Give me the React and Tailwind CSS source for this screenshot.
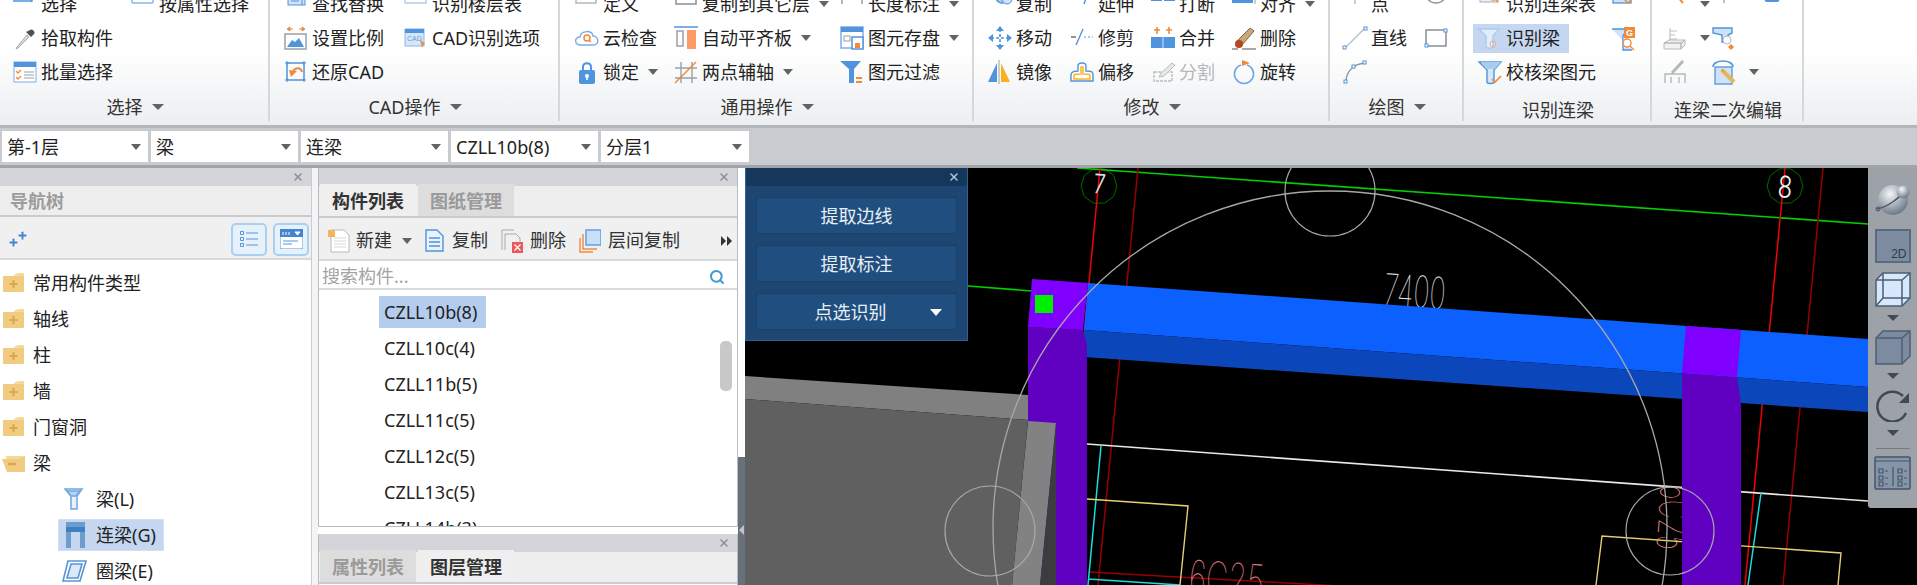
import React from "react";
import { X, Search, Plus } from "lucide-react";

const BLUE = "#4f94dc";
const ORANGE = "#ef8a3a";
const GREY = "#9aa0a6";

const Ico = ({ children, w = 24, h = 24 }) => (
    <svg width={w} height={h} viewBox={`0 0 ${w} ${h}`} fill="none" className="overflow-visible">
        {children}
    </svg>
);

const ribbonIcons = {
    select: <Ico><rect x="1" y="-6" width="18" height="15" stroke={BLUE} strokeWidth="1.5" fill="#fff" /><path d="M13 -2v8" stroke={ORANGE} strokeDasharray="2 1" /><path d="M17 2l5 5-3 1-1 3z" fill={BLUE} /></Ico>,
    attrSelect: <Ico><rect x="1" y="-4" width="21" height="15" rx="1" stroke="#8ab6e8" strokeWidth="1.5" fill="#fff" /><path d="M9 1h9M9 4h9M9 7h9M4 1h2M4 4h2M4 7h2" stroke={GREY} /></Ico>,
    picker: <Ico><path d="M4 21l-1 2 2-1 11-11-2-2z" fill="#d8dadc" stroke="#a5a8ab" /><path d="M13 6l5 5 3-3c2-2-2-6-4-4z" fill="#55504a" /></Ico>,
    batch: <Ico><rect x="1" y="2" width="22" height="20" fill="#fff" stroke="#7db0e8" /><rect x="1" y="2" width="22" height="5" fill={BLUE} /><path d="M3 11l2 2 3-3M3 17l2 2 3-3" stroke={ORANGE} strokeWidth="1.3" /><path d="M11 12h10M11 15h10M11 18h10" stroke={GREY} /></Ico>,
    find: <Ico><rect x="4" y="-4" width="17" height="17" fill="#cfe2f8" stroke={BLUE} /><path d="M7 0h8M7 3h8M7 6h8M7 9h8M18 -2v15" stroke={BLUE} /></Ico>,
    floorTable: <Ico><rect x="1" y="-4" width="21" height="15" fill="#fff" stroke="#8ab6e8" /><rect x="3" y="-3" width="8" height="8" fill={ORANGE} /><path d="M13 1h7M13 4h7M13 7h7" stroke={GREY} /></Ico>,
    scale: <Ico><path d="M3 3l3-2v4zM9 3H6M21 3l-3-2v4zM15 3h3" fill={ORANGE} stroke={ORANGE} /><rect x="1" y="8" width="21" height="15" fill="#fff" stroke={GREY} strokeWidth="1.5" /><path d="M3 21l5-7 3 2 4-4 5 9z" fill={BLUE} /></Ico>,
    cadOpt: <Ico><rect x="1" y="3" width="19" height="17" fill="#d6e6f9" stroke="#8ab6e8" /><rect x="1" y="3" width="19" height="4" fill={BLUE} /><text x="3" y="15" fontSize="7" fill="#6c9bd3" fontFamily="Liberation Sans">CAD</text><path d="M16 13l5 5-2 1-1 3z" fill={ORANGE} /></Ico>,
    restore: <Ico><rect x="3" y="3" width="17" height="17" stroke={BLUE} strokeWidth="1.5" /><path d="M1 3h4M3 1v4M18 3h4M20 1v4M1 20h4M3 18v4M18 20h4M20 18v4" stroke={BLUE} /><path d="M18 12c-1-5-7-5-9 0" stroke={ORANGE} strokeWidth="2" /><path d="M5 10l8 1-6 6z" fill={ORANGE} /></Ico>,
    define: <Ico><rect x="1" y="-6" width="20" height="17" fill="#fff" stroke="#b5b8bb" strokeWidth="1.5" /><rect x="11" y="0" width="8" height="4" fill={ORANGE} /><rect x="3" y="0" width="7" height="4" fill="#d9d9d9" /></Ico>,
    copyLayer: <Ico><rect x="2" y="-4" width="20" height="16" fill="#fff" stroke="#8a8f95" strokeWidth="1.5" /><rect x="2" y="-4" width="20" height="7" fill="#8a8f95" /></Ico>,
    lenDim: <Ico><path d="M2 -2v14M22 -2v14" stroke={GREY} strokeWidth="1.5" /><path d="M5 4h14" stroke={BLUE} strokeDasharray="2 2" /><path d="M4 4l3-2v4zM20 4l-3-2v4z" fill={BLUE} /></Ico>,
    cloud: <Ico><path d="M6 19c-7 0-7-8-1-8 1-7 12-7 13-1 6 0 7 9 0 9z" fill="#fff" stroke="#78aee8" strokeWidth="1.5" /><circle cx="12" cy="12" r="3" stroke={ORANGE} strokeWidth="1.5" /><path d="M14 14l2 2" stroke={ORANGE} strokeWidth="1.5" /></Ico>,
    lock: <Ico><path d="M8 11V7c0-5 8-5 8 0v4" stroke={BLUE} strokeWidth="2" /><rect x="4" y="10" width="16" height="14" rx="2" fill={BLUE} /><circle cx="12" cy="16" r="2" fill="#fff" /><path d="M12 16v4" stroke="#fff" strokeWidth="1.5" /></Ico>,
    alignSlab: <Ico><path d="M0 1h24" stroke={BLUE} strokeWidth="1.5" /><rect x="3" y="5" width="6" height="15" fill="#fff" stroke={GREY} strokeWidth="1.5" /><rect x="13" y="4" width="9" height="19" fill="#fb9a66" /></Ico>,
    twoPoint: <Ico><path d="M7 2v21M18 2v21M1 8h22M1 18h22" stroke={GREY} strokeWidth="1.4" /><path d="M1 23L22 2" stroke={ORANGE} strokeWidth="1.4" /></Ico>,
    saveEl: <Ico><rect x="1" y="1" width="22" height="21" fill="#fff" stroke="#7db0e8" strokeWidth="1.5" /><rect x="1" y="1" width="22" height="5" fill={BLUE} /><rect x="4" y="10" width="6" height="5" stroke={GREY} /><rect x="12" y="11" width="11" height="12" fill="#fff" stroke={BLUE} strokeWidth="1.5" /><rect x="15" y="17" width="5" height="5" fill={ORANGE} /></Ico>,
    filter: <Ico><path d="M0 1h21l-7 8v14h-5V9z" fill={BLUE} /><path d="M16 18h6M16 22h6" stroke={ORANGE} strokeWidth="1.8" /></Ico>,
    copy: <Ico><circle cx="9" cy="0" r="5" fill="#cfe2f8" stroke={GREY} /><circle cx="14" cy="5" r="6" fill="#a9cdf3" stroke={BLUE} strokeWidth="1.5" /><circle cx="19" cy="7" r="5" fill="#cfe2f8" stroke={BLUE} /></Ico>,
    move: <Ico><path d="M12 3v18M3 12h18" stroke={BLUE} strokeWidth="1.6" strokeDasharray="3 2" /><path d="M12 0l4 5H8zM12 24l4-5H8zM0 12l5-4v8zM24 12l-5-4v8z" fill={BLUE} /></Ico>,
    mirror: <Ico><path d="M0 22L9 3v19z" fill={BLUE} /><path d="M11 0v24" stroke={GREY} /><path d="M13 3l9 19h-9z" fill="#fbb01e" /></Ico>,
    extend: <Ico><path d="M1 -2h8" stroke={GREY} strokeDasharray="2 2" /><path d="M14 12l5-14" stroke={BLUE} strokeWidth="1.4" /></Ico>,
    trim: <Ico><path d="M1 11h5" stroke="#4a4a4a" strokeWidth="1.2" /><path d="M6 19L13 3" stroke={BLUE} strokeWidth="1.4" /><path d="M14 11h9" stroke={BLUE} strokeWidth="1.2" strokeDasharray="2 2" /></Ico>,
    offset: <Ico><path d="M1 21v-6c0-3 2-4 7-4V6c0-4 8-4 8 0v5c6 0 7 1 7 4v6z" fill="#fff" stroke={BLUE} strokeWidth="1.4" /><path d="M4 19v-3c0-2 1-2 7-2V7h2v7c7 0 7 0 7 2v3z" fill="#fff" stroke="#fbb01e" strokeWidth="1.4" /></Ico>,
    breakEl: <Ico><rect x="0" y="-1" width="11" height="10" fill={BLUE} /><rect x="13" y="-1" width="11" height="10" fill={BLUE} /></Ico>,
    merge: <Ico><path d="M6 1v7M3 4h6M18 1v7M15 4h6" stroke={ORANGE} strokeWidth="1.6" /><rect x="0" y="11" width="24" height="11" fill={BLUE} /><path d="M12 11v11" stroke="#cfe2f8" /></Ico>,
    split: <Ico><path d="M3 12h18v9H3z" stroke="#b9bcbf" strokeWidth="1.4" strokeDasharray="3 1" /><path d="M8 17l2-4 11-10 3 2-11 11z" fill="#e6e7e8" stroke="#b9bcbf" /></Ico>,
    align: <Ico w={24}><rect x="0" y="-2" width="21" height="13" fill={BLUE} /><path d="M23 -4v16" stroke={GREY} /></Ico>,
    del: <Ico><path d="M18 2l4 3-12 14-5-4z" fill="#c9a877" stroke="#77644a" /><circle cx="7" cy="18" r="4" fill="#b4481e" /><path d="M0 23h6M10 23h14" stroke="#555" /></Ico>,
    rotate: <Ico><path d="M9 5a9.5 9.5 0 1 0 6 0" stroke="#6fa8e4" strokeWidth="1.7" /><path d="M10 0l8 3-8 3z" fill={ORANGE} /></Ico>,
    point: <Ico><path d="M12 -2v14M5 1h14" stroke={GREY} /><rect x="9" y="-2" width="6" height="6" fill={BLUE} /></Ico>,
    line: <Ico><path d="M3 21L21 3" stroke="#b9c0c7" strokeWidth="1.4" /><rect x="0" y="20" width="3" height="3" fill="#fff" stroke={BLUE} /><rect x="21" y="1" width="3" height="3" fill="#fff" stroke={BLUE} /></Ico>,
    arc: <Ico><path d="M3 22C3 12 10 4 22 3" stroke="#8e959c" strokeWidth="1.4" /><rect x="1" y="20" width="3" height="3" fill="#fff" stroke={BLUE} /><rect x="9" y="5" width="3" height="3" fill="#fff" stroke={BLUE} /><rect x="20" y="1" width="3" height="3" fill="#fff" stroke={BLUE} /></Ico>,
    circle: <Ico><circle cx="12" cy="0" r="11" stroke="#8e959c" strokeWidth="1.4" /><rect x="11" y="-1" width="3" height="3" stroke={BLUE} /></Ico>,
    rect: <Ico><rect x="2" y="4" width="20" height="16" stroke="#6b7278" strokeWidth="1.2" /><rect x="1" y="18" width="3" height="3" fill="#fff" stroke={BLUE} /><rect x="20" y="3" width="3" height="3" fill="#fff" stroke={BLUE} /></Ico>,
    beamTable: <Ico><rect x="2" y="-3" width="18" height="13" fill="#e8f0fa" stroke="#aab" /><circle cx="15" cy="5" r="3" stroke={ORANGE} strokeWidth="1.3" /><path d="M17 7l3 3" stroke={ORANGE} strokeWidth="1.4" /></Ico>,
    tableCheck: <Ico><path d="M5 -4h14l3 6H2z" fill="#fff" stroke={BLUE} strokeWidth="1.3" /><rect x="2" y="2" width="18" height="9" fill="#cfe2f8" stroke={BLUE} strokeWidth="1.3" /><path d="M13 7l4 4 6-6" stroke={ORANGE} strokeWidth="1.5" /></Ico>,
    recBeam: <Ico><path d="M1 3h20l-6 7v10c0 3-7 3-7 0V10z" fill="#e3edf8" stroke="#a9cbed" strokeWidth="1.4" /><circle cx="15" cy="18" r="3" stroke="#f2a98a" /></Ico>,
    recBeamG: <Ico><path d="M1 3h15l-4 7v14h9" stroke={BLUE} strokeWidth="1.3" fill="#cfe2f8" /><rect x="13" y="1" width="11" height="11" fill={ORANGE} /><text x="15" y="10" fontSize="9" fontWeight="700" fill="#fff" fontFamily="Liberation Sans">G</text><circle cx="16" cy="17" r="4" fill="#fff" stroke={ORANGE} strokeWidth="1.4" /><path d="M19 20l4 4" stroke={ORANGE} strokeWidth="1.5" /></Ico>,
    checkBeam: <Ico><path d="M1 2h22l-7 8v12c0 2-7 2-7 0V10z" fill="#d5e6f8" stroke={BLUE} strokeWidth="1.4" /><path d="M3 2h20l-6 7H8z" fill="#a9cbed" /><path d="M14 19l3 3 6-6" stroke={ORANGE} strokeWidth="1.6" /></Ico>,
    editA: <Ico><path d="M2 -2l8 8M14 -2L4 8M18 0L10 8" stroke={BLUE} strokeDasharray="2 1" /><path d="M8 -3l12 14" stroke={ORANGE} strokeWidth="2" /></Ico>,
    editB: <Ico><path d="M5 -3l7 7 7-7M12 4v7" stroke="#bfc2c5" strokeWidth="2" /></Ico>,
    editC: <Ico><path d="M12 2v6" stroke={ORANGE} strokeWidth="3" /><path d="M2 5h20l-4 5H6z" fill={BLUE} /><rect x="7" y="0" width="10" height="4" fill="#777" /></Ico>,
    beam3d: <Ico><path d="M7 2v14M7 5h7M7 9h5M7 13h7" stroke="#bfc2c5" strokeWidth="1.2" /><path d="M1 17l5-3h16l-4 3H1zM1 17h17v6H1zM18 17l4-3v5l-4 4z" fill="#f2f2f2" stroke="#b5b8bb" /></Ico>,
    beamZoom: <Ico><path d="M1 2h19v5l-4 2v7h-6V9L1 7z" fill="#cfe2f8" stroke={BLUE} strokeWidth="1.4" /><circle cx="15" cy="14" r="4" fill="#fff" stroke="#b5b8bb" /><path d="M19 18l3 3-3 3-3-3z" fill={ORANGE} /></Ico>,
    brushGrey: <Ico><path d="M2 23v-9h20v9M8 23v-6M16 23v-6" stroke="#b5b8bb" strokeWidth="1.4" /><path d="M9 13L20 1" stroke="#b5b8bb" strokeWidth="3" /></Ico>,
    beamEdit: <Ico><path d="M1 7c0-8 20-8 20 0" stroke={BLUE} strokeWidth="1.5" /><rect x="3" y="7" width="17" height="17" fill="#cfe2f8" stroke={BLUE} strokeWidth="1.3" /><path d="M10 10l12 12" stroke="#e4b857" strokeWidth="4" /><path d="M9 9l3 1-2 2z" fill={ORANGE} /></Ico>,
};

const Caret = ({ className = "" }) => (
    <span className={`inline-block h-0 w-0 border-x-[5px] border-t-[6px] border-x-transparent border-t-[#5f6368] ${className}`} />
);

const ribbon = [
    {
        label: "选择", arrow: true, cls: "w-[270px] pl-[13px]",
        cols: [
            { cls: "w-[118px]", items: [["select", "选择"], ["picker", "拾取构件"], ["batch", "批量选择"]] },
            { cls: "w-[130px]", items: [["attrSelect", "按属性选择"]] },
        ],
    },
    {
        label: "CAD操作", arrow: true, cls: "w-[290px] pl-[14px]",
        cols: [
            { cls: "w-[120px]", items: [["find", "查找替换"], ["scale", "设置比例"], ["restore", "还原CAD"]] },
            { cls: "w-[150px]", items: [["floorTable", "识别楼层表"], ["cadOpt", "CAD识别选项"]] },
        ],
    },
    {
        label: "通用操作", arrow: true, cls: "w-[414px] pl-[15px]",
        cols: [
            { cls: "w-[99px]", items: [["define", "定义"], ["cloud", "云检查"], ["lock", "锁定", true]] },
            { cls: "w-[166px]", items: [["copyLayer", "复制到其它层", true], ["alignSlab", "自动平齐板", true], ["twoPoint", "两点辅轴", true]] },
            { cls: "w-[125px]", items: [["lenDim", "长度标注", true], ["saveEl", "图元存盘", true], ["filter", "图元过滤"]] },
        ],
    },
    {
        label: "修改", arrow: true, cls: "w-[356px] pl-[14px]",
        cols: [
            { cls: "w-[82px]", items: [["copy", "复制"], ["move", "移动"], ["mirror", "镜像"]] },
            { cls: "w-[81px]", items: [["extend", "延伸"], ["trim", "修剪"], ["offset", "偏移"]] },
            { cls: "w-[81px]", items: [["breakEl", "打断"], ["merge", "合并"], ["split", "分割", false, true]] },
            { cls: "w-[90px]", items: [["align", "对齐", true], ["del", "删除"], ["rotate", "旋转"]] },
        ],
    },
    {
        label: "绘图", arrow: true, cls: "w-[134px] pl-[13px]",
        cols: [
            { cls: "w-[81px]", items: [["point", "点"], ["line", "直线"], ["arc", ""]] },
            { cls: "w-[30px]", items: [["circle", ""], ["rect", ""]] },
        ],
    },
    {
        label: "识别连梁", cls: "w-[188px] pl-[14px]",
        cols: [
            { cls: "w-[133px]", items: [["beamTable", "识别连梁表"], ["recBeam", "识别梁", false, false, true], ["checkBeam", "校核梁图元"]] },
            { cls: "w-[28px]", items: [["tableCheck", ""], ["recBeamG", ""]] },
        ],
    },
    {
        label: "连梁二次编辑", cls: "w-[152px] pl-[11px]",
        cols: [
            { cls: "w-[49px]", items: [["editA", "", true], ["beam3d", "", true, true], ["brushGrey", ""]] },
            { cls: "w-[48px]", items: [["editB", ""], ["beamZoom", ""], ["beamEdit", "", true]] },
            { cls: "w-[28px]", items: [["editC", ""]] },
        ],
    },
];

const RibbonItem = ({ icon, label, caret, disabled, active }) => (
    <div className="flex h-[34px] items-center">
        <div className={`-ml-[5px] flex h-[29px] items-center pl-[5px] ${active ? "w-[96px] bg-[#c5d7f0]" : ""}`}>
            <span className="mr-[4px] flex w-[24px] shrink-0 items-center justify-center">
                {ribbonIcons[icon]}
            </span>
            {label && (
                <span className={`whitespace-nowrap ${disabled ? "text-[#b5b7b9]" : "text-[#222]"}`}>{label}</span>
            )}
            {caret && <Caret className="ml-[9px] shrink-0" />}
        </div>
    </div>
);

const RibbonGroup = ({ group }) => (
    <div className={`relative h-[125px] shrink-0 ${group.cls}`}>
        <div className="-mt-[13px] flex">
            {group.cols.map((col, i) => (
                <div key={i} className={`shrink-0 ${col.cls}`}>
                    {col.items.map((it, j) => (
                        <RibbonItem key={j} icon={it[0]} label={it[1]} caret={it[2]} disabled={it[3]} active={it[4]} />
                    ))}
                </div>
            ))}
        </div>
        {/* group caption sits under the cut-off rows */}
        <div className={`absolute inset-x-0 flex h-[28px] items-center justify-center gap-[9px] text-[#333] ${group.arrow ? "top-[93px]" : "top-[96px]"}`}>
            {group.label}
            {group.arrow && <Caret className="border-x-[6px] border-t-[6px]" />}
        </div>
        <div className="absolute right-0 top-0 h-[121px] w-[2px] bg-[#d5d7d9]" />
    </div>
);

const Combo = ({ text, cls }) => (
    <div className={`flex h-[31px] items-center justify-between bg-white pl-[5px] pr-[7px] pt-px text-[#222] ${cls}`}>
        <span>{text}</span>
        <Caret className="border-x-[4px] border-t-[5px]" />
    </div>
);

const PanelHead = ({ dark }) => (
    <div className={`flex h-[18px] shrink-0 items-center justify-end pr-[7px] ${dark ? "bg-[#16375c]" : "bg-[#d3d5d9]"}`}>
        <X size={12} strokeWidth={3} color={dark ? "#a9c8e8" : "#8a8d91"} />
    </div>
);

const Tabs = ({ tabs, active }) => (
    <div className="flex h-[32px] shrink-0 items-end border-b-2 border-[#c9cbce] bg-[#eeeeee] pl-px">
        {tabs.map((t, i) => (
            <div
                key={t}
                className={`mr-[2px] flex h-[32px] w-[96px] items-center justify-center pt-[3px] ${i === active ? "bg-[#efefef] font-bold text-[#333]" : "bg-[#dddddd] font-bold text-[#9a9a9a]"}`}
            >
                {t}
            </div>
        ))}
    </div>
);

const Folder = ({ open }) =>
    open ? (
        <svg width="24" height="20" viewBox="0 0 24 20">
            <path d="M4 3h19v16H6z" fill="#f6d897" />
            <path d="M0 6h17l6-3v16H5z" fill="#f0cb80" />
            <path d="M6 11h8" stroke="#d9a94f" strokeWidth="2.5" />
        </svg>
    ) : (
        <svg width="22" height="20" viewBox="0 0 22 20">
            <path d="M11 2l4-2h6v4H11z" fill="#f6d897" />
            <rect x="0" y="3" width="21" height="16" rx="1" fill="#f0cb80" />
            <path d="M10.500 7v8M6.500 11h8" stroke="#d9a94f" strokeWidth="2" />
        </svg>
    );

const treeRows = ["常用构件类型", "轴线", "柱", "墙", "门窗洞"];

const NavPanel = () => (
    <div className="flex w-[312px] shrink-0 flex-col border-r border-[#c9ccd0] bg-white">
        <PanelHead />
        <div className="flex h-[31px] shrink-0 items-center border-b-2 border-[#c9cbce] bg-[#eeeeee] pl-[10px] pt-px font-bold text-[#9c9c9c]">
            导航树
        </div>
        <div className="flex h-[43px] shrink-0 items-center justify-between border-b-2 border-[#d8dadc] bg-[#f0f0f0] pl-[8px] pr-[2px] pt-[3px]">
            <div className="relative h-[18px] w-[20px]">
                <Plus className="absolute bottom-0 left-0" size={11} strokeWidth={4} color="#3e83d6" />
                <Plus className="absolute right-0 top-0" size={11} strokeWidth={4} color="#3e83d6" />
            </div>
            <div className="flex gap-[6px]">
                <div className="flex h-[33px] w-[36px] items-center justify-center rounded-[5px] border-2 border-[#a8d0f5] bg-[#e6f1fc]">
                    <svg width="20" height="18" viewBox="0 0 20 18" fill="none" stroke="#5a94d6">
                        <path d="M1.500 1.500h3v3h-3zM1.500 7.500h3v3h-3zM1.500 13.500h3v3h-3zM7 3h12M7 9h12M7 15h12" />
                    </svg>
                </div>
                <div className="flex h-[33px] w-[36px] items-center justify-center rounded-[5px] border-2 border-[#a8d0f5] bg-[#e6f1fc]">
                    <svg width="23" height="20" viewBox="0 0 23 20">
                        <rect x="0" y="0" width="23" height="20" fill="#fff" stroke="#5a94d6" />
                        <rect x="0" y="0" width="23" height="8" fill="#4585cf" />
                        <path d="M3 3v3M6 3v3M9 3v3M15 3h5l-2.500 3z" stroke="#fff" fill="#fff" />
                        <path d="M3 12h15M3 15h9" stroke="#5a94d6" />
                    </svg>
                </div>
            </div>
        </div>
        <div className="flex flex-col pt-[5px] text-[#222]">
            {treeRows.map((t) => (
                <div key={t} className="flex h-[36px] items-center pl-[3px]">
                    <span className="flex w-[30px]"><Folder /></span>
                    {t}
                </div>
            ))}
            <div className="flex h-[36px] items-center pl-[2px]">
                <span className="flex w-[31px]"><Folder open /></span>
                梁
            </div>
            <div className="flex h-[36px] items-center pl-[64px]">
                <span className="flex w-[32px]">
                    <svg width="20" height="22" viewBox="0 0 20 22" fill="none" stroke="#6ea6e0" strokeWidth="1.5">
                        <path d="M1 1h17l-5 7v13H7V8z" fill="#e8f1fb" />
                        <path d="M3 3h13l-4 5H7z" fill="#b8d4f2" />
                    </svg>
                </span>
                梁(L)
            </div>
            <div className="my-[2px] ml-[58px] flex h-[32px] w-[106px] items-center border border-[#d3e0f3] bg-[#c5d7f0] pl-[7px]">
                <span className="flex w-[30px]">
                    <svg width="19" height="26" viewBox="0 0 19 26">
                        <path d="M0 0h19v26h-5V9H5v17H0z" fill="#6f9dcb" />
                        <rect x="0" y="5" width="19" height="5" fill="#3f7fc4" />
                    </svg>
                </span>
                连梁(G)
            </div>
            <div className="flex h-[36px] items-center pl-[62px]">
                <span className="flex w-[34px]">
                    <svg width="25" height="22" viewBox="0 0 25 22" fill="none" stroke="#5a94d6" strokeWidth="1.6">
                        <path d="M6 1h18l-6 20H1z" fill="#fff" />
                        <path d="M9 4h11l-4 14H5z" fill="#dce9f8" />
                    </svg>
                </span>
                圈梁(E)
            </div>
        </div>
    </div>
);

const parts = ["CZLL10b(8)", "CZLL10c(4)", "CZLL11b(5)", "CZLL11c(5)", "CZLL12c(5)", "CZLL13c(5)", "CZLL14b(3)"];

const PartPanel = () => (
    <div className="flex w-[420px] shrink-0 flex-col bg-white">
        <div className="flex h-[359px] flex-col border-x border-b border-[#b9bcc0]">
            <PanelHead />
            <Tabs tabs={["构件列表", "图纸管理"]} active={0} />
            <div className="flex h-[43px] shrink-0 items-center border-b-2 border-[#d8dadc] bg-[#f0f0f0] pt-[4px] text-[#333]">
                <span className="ml-[9px] flex w-[28px]">
                    <svg width="22" height="24" viewBox="0 0 22 24">
                        <path d="M3 1h13l5 5v17H3z" fill="#fff" stroke="#b5b8bb" />
                        <path d="M6 9h12M6 12h12M6 15h12M6 18h12" stroke="#d8d8d8" />
                        <rect x="0" y="1" width="7" height="7" fill="#f5b45c" />
                    </svg>
                </span>
                新建
                <Caret className="ml-[10px] border-x-[4px] border-t-[5px]" />
                <span className="ml-[13px] flex w-[27px]">
                    <svg width="19" height="23" viewBox="0 0 19 23" fill="none" stroke="#4f94dc" strokeWidth="1.4">
                        <path d="M1 1h11l6 6v15H1z" fill="#eaf3fc" />
                        <path d="M4 9h11M4 13h11M4 17h11" />
                    </svg>
                </span>
                复制
                <span className="ml-[13px] flex w-[29px]">
                    <svg width="22" height="24" viewBox="0 0 22 24" fill="none" stroke="#a7aaad">
                        <path d="M1 21V1h12M4 21V5h11l4 4v4" />
                        <rect x="11" y="13" width="11" height="11" fill="#ea5a5a" stroke="none" />
                        <path d="M13.500 15.500l6 6M19.500 15.500l-6 6" stroke="#fff" strokeWidth="1.3" />
                    </svg>
                </span>
                删除
                <span className="ml-[13px] flex w-[29px]">
                    <svg width="22" height="24" viewBox="0 0 22 24" fill="none">
                        <rect x="7" y="1" width="15" height="15" fill="#c9e0fa" stroke="#5a9ae0" strokeWidth="1.4" />
                        <path d="M4 5v15h14M1 9v14h13" stroke="#ef8a3a" strokeWidth="1.4" />
                    </svg>
                </span>
                层间复制
                <span className="ml-auto mr-[5px] flex gap-[1px]">
                    <span className="h-0 w-0 border-y-[5px] border-l-[5px] border-y-transparent border-l-[#333]" />
                    <span className="h-0 w-0 border-y-[5px] border-l-[5px] border-y-transparent border-l-[#333]" />
                </span>
            </div>
            <div className="flex h-[29px] shrink-0 items-center justify-between border-b-2 border-[#d8dadc] bg-white pl-[3px] pr-[12px] pt-[4px] text-[#a4a4a4]">
                搜索构件...
                <Search size={16} strokeWidth={3} color="#3d9ad6" />
            </div>
            <div className="relative min-h-0 flex-1 overflow-hidden pt-[6px] text-[#222]">
                {parts.map((p, i) => (
                    <div key={p} className={`mb-[4px] ml-[60px] flex h-[32px] w-[107px] items-center whitespace-nowrap pl-[5px] ${i === 0 ? "bg-[#b4cdee]" : ""}`}>
                        {p}
                    </div>
                ))}
                {/* scrollbar thumb */}
                <div className="absolute right-[5px] top-[51px] h-[50px] w-[12px] rounded-[5px] bg-[#c8c8c8]" />
            </div>
        </div>
        <div className="h-[7px] shrink-0" />
        <div className="flex min-h-0 flex-1 flex-col border-x border-[#b9bcc0]">
            <PanelHead />
            <Tabs tabs={["属性列表", "图层管理"]} active={1} />
        </div>
    </div>
);

const CadText = ({ x, y, rot, size, color, sx = 1, weight = 100, children }) => (
    <text
        transform={`translate(${x} ${y}) rotate(${rot}) scale(${sx} 1)`}
        fontSize={size}
        fontWeight={weight}
        fill={color}
        fontFamily="Inter"
    >
        {children}
    </text>
);

const CadDrawing = () => (
    <svg className="absolute inset-0" width="1172" height="417" viewBox="745 168 1172 417">
        {/* grid bubbles */}
        <polygon points="1117,186 1113.600,196.600 1104.600,203.100 1093.400,203.100 1084.400,196.600 1081,186 1084.400,175.400 1093.400,168.900 1104.600,168.900 1113.600,175.400" fill="none" stroke="#006a00" />
        <polygon points="1803,186 1799.600,196.600 1790.600,203.100 1779.400,203.100 1770.400,196.600 1767,186 1770.400,175.400 1779.400,168.900 1790.600,168.900 1799.600,175.400" fill="none" stroke="#006a00" />
        <line x1="1077" y1="168" x2="1868" y2="224" stroke="#00d000" strokeWidth="1.6" />
        <line x1="968" y1="286" x2="1032" y2="291" stroke="#00d000" strokeWidth="1.6" />

        {/* axis lines */}
        <line x1="1138" y1="168" x2="1098" y2="585" stroke="#960000" strokeWidth="1.5" />
        <line x1="1823" y1="168" x2="1783" y2="585" stroke="#960000" strokeWidth="1.5" />
        <line x1="1100" y1="168" x2="1060" y2="585" stroke="#f00000" strokeWidth="1.5" />
        <line x1="1785" y1="168" x2="1745" y2="585" stroke="#f00000" strokeWidth="1.5" />
        <line x1="1089" y1="572" x2="1340" y2="586" stroke="#960000" strokeWidth="1.5" />

        <CadText x={1093} y={193} rot={4} size={27} color="#e0e0e0" sx={0.8} weight={300}>7</CadText>
        <CadText x={1777} y={197} rot={4} size={30} color="#f2f2f2" sx={0.8} weight={300}>8</CadText>
        <CadText x={1383} y={305} rot={4} size={44} color="#e8e8e8" sx={0.62}>7400</CadText>
        <CadText x={1188} y={593} rot={4} size={46} color="#e88080" sx={0.66}>6C25</CadText>
        <CadText x={1661} y={484} rot={94} size={44} color="#e88080" sx={0.6}>6C25</CadText>

        {/* plan lines below the beam */}
        <line x1="1087" y1="444" x2="1868" y2="501" stroke="#e8e8e8" strokeWidth="1.6" />
        <path d="M1101 446L1088 585M1088 579L1180 585M1761 493L1748 585" stroke="#19dcdc" strokeWidth="1.5" fill="none" />
        <path d="M1087 499L1188 506L1180 585M1596 585L1602 536L1841 553L1838 585" stroke="#e6cf72" strokeWidth="1.4" fill="none" />

        {/* beam */}
        <polygon points="1088,283 1868,339 1868,387 1084,330" fill="#0c60fe" />
        <polygon points="1084,330 1868,387 1868,412 1084,357" fill="#0c46bb" />

        {/* columns */}
        <polygon points="1028,327 1083,330 1087,345 1087,585 1028,585" fill="#6000c0" />
        <polygon points="1032,279 1088,283 1083,330 1028,327" fill="#8000ff" />
        <polygon points="1682,373 1737,377 1741,404 1741,585 1682,585" fill="#6000c0" />
        <polygon points="1686,326 1741,330 1737,377 1682,373" fill="#8000ff" />
        <rect x="1035" y="295" width="18" height="18" fill="#00f000" />

        {/* grey slab */}
        <polygon points="745,376 1028,395 1028,420 745,399" fill="#808080" />
        <polygon points="745,399 1028,420 1012,585 745,585" fill="#606060" />
        <polygon points="1028,421 1056,423 1040,585 1012,585" fill="#828282" />
        <polygon points="1056,423 1056,585 1040,585" fill="#3c3c3c" />

        <circle cx="1330" cy="528" r="337" fill="none" stroke="#a8a8a8" strokeWidth="1.3" />
        <circle cx="990" cy="531" r="45" fill="none" stroke="#a8a8a8" strokeWidth="1.2" />
        <circle cx="1330" cy="191" r="45" fill="none" stroke="#a8a8a8" strokeWidth="1.2" />
        <circle cx="1670" cy="531" r="44" fill="none" stroke="#a8a8a8" strokeWidth="1.2" />
    </svg>
);

const ExtractPanel = () => (
    <div className="absolute left-0 top-0 flex h-[173px] w-[223px] flex-col border border-t-0 border-[#2a6299] bg-[#1d4673] text-[#e8eef5]">
        <PanelHead dark />
        <div className="flex flex-col gap-[11px] px-[10px] pt-[11px]">
            {["提取边线", "提取标注"].map((t) => (
                <div key={t} className="flex h-[37px] items-center justify-center rounded-[3px] border border-[#17406b] bg-[#1f4e7f] pt-[2px]">
                    {t}
                </div>
            ))}
            <div className="relative flex h-[37px] items-center justify-center rounded-[3px] border border-[#17406b] bg-[#1f4e7f] pr-[12px] pt-[2px]">
                点选识别
                <span className="absolute right-[14px] top-[15px] h-0 w-0 border-x-[6px] border-t-[7px] border-x-transparent border-t-white" />
            </div>
        </div>
    </div>
);

const ViewTool = () => {
    const drop = <span className="mb-[9px] mt-[8px] h-0 w-0 border-x-[6px] border-t-[6px] border-x-transparent border-t-[#3f4a58]" />;
    return (
        <div className="absolute right-0 top-0 flex h-[340px] w-[49px] flex-col items-center rounded-bl-[3px] bg-[#9da2a8] pt-[15px]">
            <svg width="36" height="34" viewBox="0 0 36 34">
                <defs>
                    <radialGradient id="ball" cx="40%" cy="30%" r="70%">
                        <stop offset="0" stopColor="#f4f6f8" />
                        <stop offset="1" stopColor="#6d7a8a" />
                    </radialGradient>
                </defs>
                <circle cx="18" cy="17" r="15" fill="url(#ball)" />
                <path d="M2 26C12 24 24 16 31 6" stroke="#4c5664" strokeWidth="1.5" fill="none" />
                <circle cx="28" cy="9" r="6.500" fill="url(#ball)" />
                <circle cx="3" cy="26" r="2" fill="none" stroke="#4c5664" />
            </svg>
            <div className="relative mt-[12px] h-[34px] w-[36px] border-2 border-[#5a6a80] bg-[#7d8ba0]">
                <span className="absolute bottom-[1px] right-[2px] font-['Liberation_Sans',sans-serif] text-[12px] leading-none text-[#2e3a4a]">2D</span>
            </div>
            <svg className="mt-[9px] shrink-0" width="36" height="35" viewBox="0 0 36 35" fill="none" stroke="#4f5e72" strokeWidth="1.5">
                <path d="M8 1h27v25l-8 8H1V8z" fill="#d6e8fb" />
                <path d="M1 8h26v26M27 8l8-7M8 1v25h27M8 26l-7 8" />
            </svg>
            {drop}
            <svg className="shrink-0" width="36" height="35" viewBox="0 0 36 35" stroke="#4f5e72" strokeWidth="1.5">
                <path d="M8 1h27v25l-8 8H1V8z" fill="#7d8ba0" />
                <path d="M1 8h26v26M27 8l8-7" fill="none" />
            </svg>
            {drop}
            <svg className="mt-[2px] shrink-0" width="34" height="32" viewBox="0 0 34 32" fill="none" stroke="#3f4a58" strokeWidth="2.5">
                <path d="M30 23A15 15 0 1 1 27 6" />
                <path d="M33 3v10H23z" fill="#3f4a58" stroke="none" />
            </svg>
            {drop}
            <div className="mt-[3px] h-[1px] w-[34px] bg-[#7c7a78]" />
            <svg className="mt-[6px] shrink-0" width="37" height="35" viewBox="0 0 37 35" fill="none" stroke="#44546a" strokeWidth="1.2">
                <rect x="1" y="2" width="35" height="32" rx="1" fill="#8795a8" strokeWidth="1.5" />
                <path d="M1 6h35M19 12v19M5 14h4v4H5zM5 21h4v4H5zM5 27h4v4H5zM24 14h4v4h-4zM24 21h4v4h-4zM24 27h4v4h-4zM11 16h3M11 23h3M11 29h3M30 16h3M30 23h3M30 29h3" />
            </svg>
        </div>
    );
};

const App = () => (
    <div className="flex h-[585px] w-[1917px] flex-col overflow-hidden bg-white font-['Noto_Sans','Noto_Sans_CJK_SC',sans-serif] text-[18px]">
        <div className="flex h-[125px] shrink-0 overflow-hidden bg-gradient-to-b from-white from-40% to-[#eceef0]">
            {ribbon.map((g) => (
                <RibbonGroup key={g.label} group={g} />
            ))}
        </div>
        <div className="h-[3px] shrink-0 bg-[#b4b7ba]" />
        <div className="flex h-[37px] shrink-0 gap-[3px] bg-[#c8cbcf] pl-[2px] pt-[3px]">
            <Combo text="第-1层" cls="w-[146px]" />
            <Combo text="梁" cls="w-[147px]" />
            <Combo text="连梁" cls="w-[147px]" />
            <Combo text="CZLL10b(8)" cls="w-[147px]" />
            <Combo text="分层1" cls="w-[148px]" />
        </div>
        <div className="h-[3px] shrink-0 bg-[#a0a4a8]" />
        <div className="flex min-h-0 flex-1">
            <NavPanel />
            <div className="w-[6px] shrink-0 bg-[#f4f4f4]" />
            <PartPanel />
            <div className="relative flex w-[7px] shrink-0 flex-col">
                <div className="h-[289px] bg-white" />
                <div className="relative flex-1 bg-[#67707b]">
                    <span className="absolute left-[1px] top-[68px] h-0 w-0 border-y-[5px] border-r-[5px] border-y-transparent border-r-[#c0c4c8]" />
                </div>
            </div>
            <div className="relative min-w-0 flex-1 bg-black">
                <CadDrawing />
                <ExtractPanel />
                <ViewTool />
            </div>
        </div>
    </div>
);

export default App;
